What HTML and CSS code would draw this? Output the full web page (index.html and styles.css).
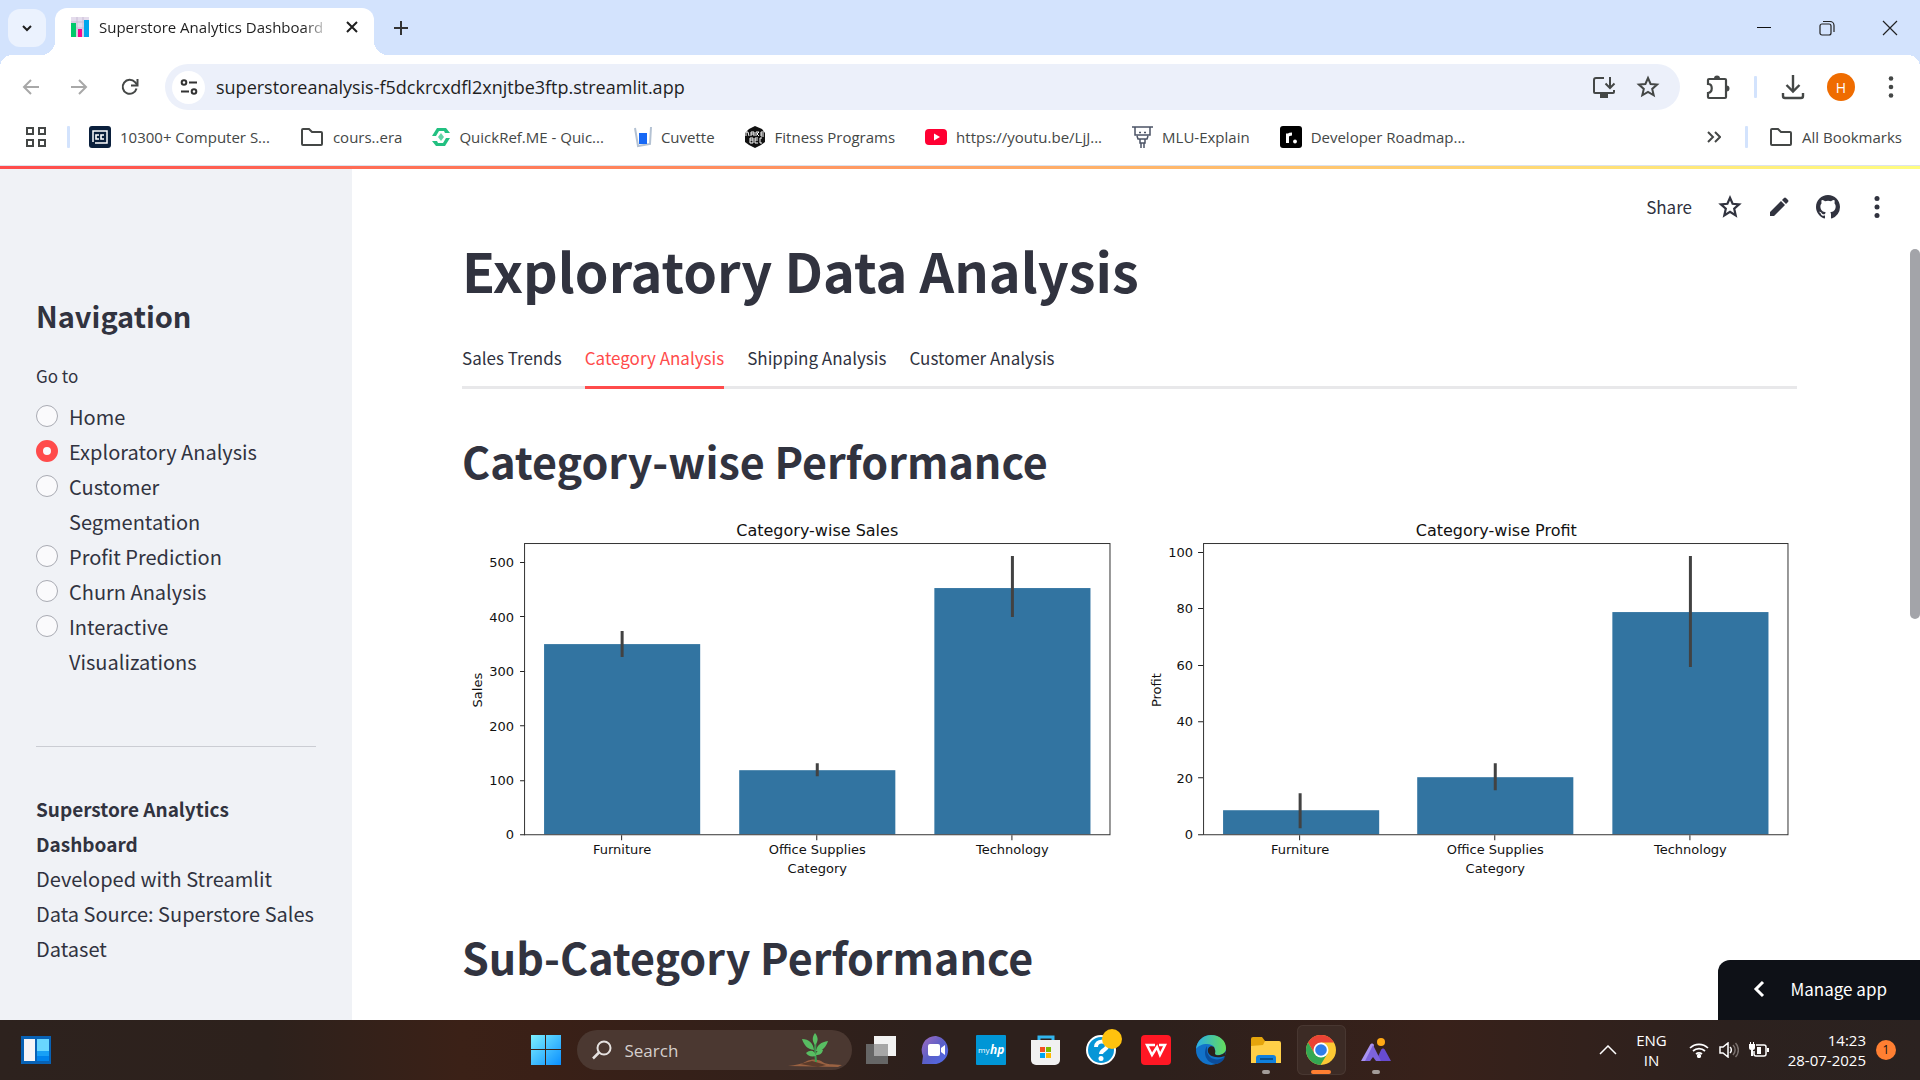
FILE: index.html
```html
<!DOCTYPE html>
<html lang="en">
<head>
<meta charset="utf-8">
<title>Superstore Analytics Dashboard</title>
<link rel="stylesheet" href="styles.css">
</head>
<body>
<div class="tabstrip">
  <button class="tab-search" aria-label="Search tabs"><svg width="12" height="12" viewBox="0 0 12 12"><path d="M2 4l4 4 4-4" fill="none" stroke="#1f1f1f" stroke-width="2"/></svg></button>
  <div class="browser-tab">
    <svg width="20" height="20" viewBox="0 0 20 20"><path fill="#e4dcec" d="M1 0h18v20H1z"/><path stroke="#c9bcd6" d="M1 5h18M7 0v20M13 0v20M1 11h18"/><path fill="#00c96b" d="M1 6h5v14H1z"/><path fill="#f70a8d" d="M8 12h4v8H8z"/><path fill="#00a6ed" d="M14 3h5v17h-5z"/></svg>
    <span class="tab-title">Superstore Analytics Dashboard</span>
    <button class="bare" aria-label="Close tab"><svg width="14" height="14" viewBox="0 0 14 14"><path d="M2 2l10 10M12 2L2 12" stroke="#1f1f1f" stroke-width="2"/></svg></button>
  </div>
  <button class="bare new-tab" aria-label="New tab"><svg width="16" height="16" viewBox="0 0 16 16"><path d="M8 1v14M1 8h14" stroke="#333" stroke-width="2"/></svg></button>
  <div class="window-controls">
    <button class="bare" aria-label="Minimize"><svg width="16" height="16" viewBox="0 0 16 16"><path d="M1 7.500h14" stroke="#111"/></svg></button>
    <button class="bare" aria-label="Restore"><svg width="16" height="16" viewBox="0 0 16 16" fill="none" stroke="#222" stroke-width="1.200"><rect x="1" y="4" width="11" height="11" rx="2"/><path d="M4 1.500h7a4 4 0 0 1 4 4V12"/></svg></button>
    <button class="bare" aria-label="Close"><svg width="16" height="16" viewBox="0 0 16 16"><path d="M1 1l14 14M15 1L1 15" stroke="#222" stroke-width="1.200"/></svg></button>
  </div>
</div>

<div class="toolbar">
  <button class="bare nav-btn" aria-label="Back"><svg width="18" height="18" viewBox="0 0 18 18" fill="none" stroke="#a8a8a8" stroke-width="2"><path d="M17 9H2M9 2L2 9l7 7"/></svg></button>
  <button class="bare nav-btn" aria-label="Forward"><svg width="18" height="18" viewBox="0 0 18 18" fill="none" stroke="#a8a8a8" stroke-width="2"><path d="M1 9h15M9 2l7 7-7 7"/></svg></button>
  <button class="bare nav-btn reload" aria-label="Reload"><svg width="18" height="18" viewBox="0 0 18 18" fill="none" stroke="#444746" stroke-width="2"><path d="M15.500 10.500A7 7 0 1 1 14 4.200L16 6.500"/><path d="M16.500 1v6.500H10"/></svg></button>
  <div class="omnibox">
    <button class="site-info" aria-label="Site information"><svg width="18" height="18" viewBox="0 0 18 18" fill="none" stroke="#333" stroke-width="2"><circle cx="4" cy="4.500" r="2.300"/><path d="M9 4.500h8M1 13.500h8"/><circle cx="14" cy="13.500" r="2.300"/></svg></button>
    <input class="url" type="text" aria-label="Address" value="superstoreanalysis-f5dckrcxdfl2xnjtbe3ftp.streamlit.app">
    <button class="bare" aria-label="Install app"><svg width="24" height="24" viewBox="0 0 24 24" fill="none" stroke="#444746" stroke-width="2"><path d="M12 3H4a2 2 0 0 0-2 2v12a1 1 0 0 0 1 1h18a1 1 0 0 0 1-1v-2"/><path d="M18 2v10M13.500 8.500L18 13l4.500-4.500"/><path fill="#444746" d="M9 19h6v3H9z"/></svg></button>
    <button class="bare" aria-label="Bookmark this tab"><svg width="24" height="24" viewBox="0 0 24 24" fill="none" stroke="#444746" stroke-width="2"><path d="M12 3l2.600 6 6.500.600-4.900 4.300 1.500 6.400-5.700-3.400-5.700 3.400 1.500-6.400-4.900-4.300 6.500-.600z"/></svg></button>
  </div>
  <button class="bare ext" aria-label="Extensions"><svg width="24" height="26" viewBox="0 0 24 26"><path d="M3 5h16a1 1 0 0 1 1 1v17a1 1 0 0 1-1 1H3a1 1 0 0 1-1-1v-4c5-1 5-9 0-9V6a1 1 0 0 1 1-1z" fill="none" stroke="#444746" stroke-width="2.200"/><path fill="#444746" d="M8 4.500a3 3 0 0 1 6 0zM20.500 11.500a3 3 0 0 1 0 6z"/></svg></button>
  <span class="divider"></span>
  <button class="bare download" aria-label="Downloads"><svg width="24" height="26" viewBox="0 0 24 26" fill="none" stroke="#444746" stroke-width="2.400"><path d="M12 1v16M5.500 11l6.500 6.500 6.500-6.500M2 19v3a2 2 0 0 0 2 2h16a2 2 0 0 0 2-2v-3"/></svg></button>
  <button class="avatar" aria-label="Profile">H</button>
  <button class="bare" aria-label="Menu"><svg width="6" height="24" viewBox="0 0 6 24" fill="#444746"><circle cx="3" cy="3.500" r="2.300"/><circle cx="3" cy="12" r="2.300"/><circle cx="3" cy="20.500" r="2.300"/></svg></button>
</div>

<nav class="bookmarks" aria-label="Bookmarks">
  <button class="bare apps" aria-label="Apps"><svg width="20" height="20" viewBox="0 0 20 20" fill="none" stroke="#444746" stroke-width="2"><path d="M1 1h6v6H1zM13 1h6v6h-6zM1 13h6v6H1zM13 13h6v6h-6z"/></svg></button>
  <span class="divider"></span>
  <a href="#"><svg width="22" height="22" viewBox="0 0 22 22"><rect width="22" height="22" rx="3" fill="#0a1f3c"/><path d="M4 16V5h14v12H6" fill="none" stroke="#fff" stroke-width="1.500"/><path d="M10 9H7v4h3M15 9h-3v4h3" fill="none" stroke="#fff" stroke-width="1.600"/></svg>10300+ Computer S...</a>
  <a href="#"><svg width="24" height="20" viewBox="0 0 24 20" fill="none" stroke="#444746" stroke-width="2"><path d="M3 2h6l3 3h9a1 1 0 0 1 1 1v11a1 1 0 0 1-1 1H3a1 1 0 0 1-1-1V3a1 1 0 0 1 1-1z"/></svg>cours..era</a>
  <a href="#"><svg width="18" height="22" viewBox="0 0 18 22" fill="#22c081"><path d="M0 10L5 2h9l4 5h-5l-1-2H7L4 10zM18 12l-5 8H4l-4-5h5l1 2h5l3-5z"/><path d="M9 7l3 4-3 4-3-4z" opacity=".7"/></svg>QuickRef.ME - Quic...</a>
  <a href="#"><svg width="18" height="22" viewBox="0 0 18 22"><path d="M1 2l3 18 12-2 1-17" fill="none" stroke="#b4c2d3" stroke-width="2"/><path fill="#1668f5" d="M5 7h8v11H5z"/></svg>Cuvette</a>
  <a href="#"><svg width="21" height="22" viewBox="0 0 21 22"><path fill="#111" d="M10 0l7 3 3 4v9l-4 3-6 3-6-3-4-3V7l4-4z"/><path d="M1 10V6h2l1 4M6 10V6h3v4M6 8h3M11 10V6h3l-2 2 2 2M19 6h-3v4h3M16 8h3M5 17v-5h3v5H5M5 14h3M13 12h-3v5h3M10 14h3M17 12h-2v5h2" fill="none" stroke="#fff"/></svg>Fitness Programs</a>
  <a href="#"><svg width="22" height="22" viewBox="0 0 22 22"><rect y="3" width="22" height="16" rx="4" fill="#f03"/><path fill="#fff" d="M9 7.500l6 3.500-6 3.500z"/></svg>https://youtu.be/LjJ...</a>
  <a href="#"><svg width="21" height="22" viewBox="0 0 21 22" fill="none" stroke="#4b5365" stroke-width="1.500"><path d="M0 1h21M3 1v8h15V1M5 10l1 3h9l1-3M8 13v4h5v-4M9 17v5M12 17v5M7 6.500h2M12 6.500h2"/></svg>MLU-Explain</a>
  <a href="#"><svg width="22" height="22" viewBox="0 0 22 22"><rect width="22" height="22" rx="3"/><path d="M7.500 17V7.500M7.500 11c0-2.500 2-3 4.500-3" fill="none" stroke="#fff" stroke-width="3"/><circle cx="15" cy="15.500" r="1.900" fill="#fff"/></svg>Developer Roadmap...</a>
  <div class="bookmarks-end">
    <button class="bare" aria-label="More bookmarks"><svg width="14" height="14" viewBox="0 0 14 14" fill="none" stroke="#444746" stroke-width="2"><path d="M1 2l5 5-5 5M8 2l5 5-5 5"/></svg></button>
    <span class="divider"></span>
    <a href="#"><svg width="24" height="20" viewBox="0 0 24 20" fill="none" stroke="#444746" stroke-width="2"><path d="M3 2h6l3 3h9a1 1 0 0 1 1 1v11a1 1 0 0 1-1 1H3a1 1 0 0 1-1-1V3a1 1 0 0 1 1-1z"/></svg>All Bookmarks</a>
  </div>
</nav>

<div class="decoration"></div>
<div class="app">
  <aside class="sidebar">
    <h2>Navigation</h2>
    <fieldset class="radio-group">
      <legend>Go to</legend>
      <label><input type="radio" name="page"><span>Home</span></label>
      <label><input type="radio" name="page" checked><span>Exploratory Analysis</span></label>
      <label><input type="radio" name="page"><span>Customer Segmentation</span></label>
      <label><input type="radio" name="page"><span>Profit Prediction</span></label>
      <label><input type="radio" name="page"><span>Churn Analysis</span></label>
      <label><input type="radio" name="page"><span>Interactive Visualizations</span></label>
    </fieldset>
    <hr>
    <p><strong>Superstore Analytics Dashboard</strong><br>Developed with Streamlit<br>Data Source: Superstore Sales Dataset</p>
  </aside>
  <main class="main">
    <div class="app-toolbar">
      <button class="bare share">Share</button>
      <button class="bare" aria-label="Favorite"><svg width="24" height="24" viewBox="0 0 24 24" fill="none" stroke="#31333f" stroke-width="2.200"><path d="M12 2.800l2.600 6 6.500.600-4.900 4.300 1.500 6.800-5.700-3.600-5.700 3.600 1.500-6.800-4.900-4.300 6.500-.600z"/></svg></button>
      <button class="bare" aria-label="Edit"><svg width="24" height="24" viewBox="0 0 24 24" fill="#31333f"><path d="M3 21v-4L14 6l4 4L7 21zM15 5l2-2a1.500 1.500 0 0 1 2 0l2 2a1.500 1.500 0 0 1 0 2l-2 2z"/></svg></button>
      <button class="bare" aria-label="View source"><svg width="24" height="24" viewBox="0 0 16 16" fill="#31333f"><path d="M8 0C3.580 0 0 3.580 0 8c0 3.540 2.290 6.530 5.470 7.590.4.070.55-.17.55-.38 0-.19-.01-.82-.01-1.490-2.010.37-2.530-.49-2.690-.94-.09-.23-.48-.94-.82-1.130-.28-.15-.68-.52-.01-.53.63-.01 1.080.58 1.230.82.72 1.210 1.870.87 2.330.66.07-.52.28-.87.51-1.070-1.780-.2-3.640-.89-3.640-3.950 0-.87.31-1.590.82-2.150-.08-.2-.36-1.020.08-2.120 0 0 .67-.21 2.200.82a7.600 7.600 0 0 1 4 0c1.530-1.040 2.200-.82 2.200-.82.44 1.100.16 1.920.08 2.120.51.56.82 1.270.82 2.150 0 3.070-1.870 3.750-3.650 3.950.29.25.54.73.54 1.480 0 1.070-.01 1.930-.01 2.200 0 .21.15.46.55.38A8 8 0 0 0 16 8c0-4.420-3.580-8-8-8z"/></svg></button>
      <button class="bare" aria-label="App menu"><svg width="24" height="24" viewBox="0 0 24 24" fill="#31333f"><circle cx="12" cy="3.500" r="2.500"/><circle cx="12" cy="12" r="2.500"/><circle cx="12" cy="20.500" r="2.500"/></svg></button>
    </div>
    <div class="content">
      <h1>Exploratory Data Analysis</h1>
      <div class="tabs" role="tablist">
        <button role="tab">Sales Trends</button>
        <button role="tab" class="active" aria-selected="true">Category Analysis</button>
        <button role="tab">Shipping Analysis</button>
        <button role="tab">Customer Analysis</button>
      </div>
      <h2>Category-wise Performance</h2>
      <div class="charts">
        <svg class="chart" viewBox="0 0 656 384" role="img" aria-label="Category-wise Sales">
          <g class="bars"><rect x="82" y="134" width="156" height="190"/><rect x="277" y="260" width="156" height="64"/><rect x="472" y="78" width="156" height="246"/></g>
          <path class="error" d="M160 121v26M355 253v13M550 46v61"/>
          <path class="ticks" d="M58 52.500h5M58 106.500h5M58 161.500h5M58 215.500h5M58 270.500h5M58 324.500h5M159.500 325v5M354.500 325v5M549.500 325v5"/>
          <rect class="frame" x="62.500" y="33.500" width="585" height="291"/>
          <text class="title" x="355" y="26">Category-wise Sales</text>
          <g class="ylabels"><text x="52" y="57">500</text><text x="52" y="112">400</text><text x="52" y="166">300</text><text x="52" y="221">200</text><text x="52" y="275">100</text><text x="52" y="329">0</text></g>
          <g class="xlabels"><text x="160" y="344">Furniture</text><text x="355" y="344">Office Supplies</text><text x="550" y="344">Technology</text><text x="355" y="363">Category</text><text transform="rotate(-90 20 180)" x="20" y="180">Sales</text></g>
        </svg>
        <svg class="chart" viewBox="0 0 656 384" role="img" aria-label="Category-wise Profit">
          <g class="bars"><rect x="82" y="300" width="156" height="24"/><rect x="276" y="267" width="156" height="57"/><rect x="471" y="102" width="156" height="222"/></g>
          <path class="error" d="M159 283v35M354 253v27M549 46v111"/>
          <path class="ticks" d="M57 42.500h5M57 98.500h5M57 155.500h5M57 211.500h5M57 267.500h5M57 324.500h5M158.500 325v5M353.500 325v5M548.500 325v5"/>
          <rect class="frame" x="62.500" y="33.500" width="584" height="291"/>
          <text class="title" x="355" y="26">Category-wise Profit</text>
          <g class="ylabels"><text x="52" y="47">100</text><text x="52" y="103">80</text><text x="52" y="160">60</text><text x="52" y="216">40</text><text x="52" y="273">20</text><text x="52" y="329">0</text></g>
          <g class="xlabels"><text x="159" y="344">Furniture</text><text x="354" y="344">Office Supplies</text><text x="549" y="344">Technology</text><text x="354" y="363">Category</text><text transform="rotate(-90 20 180)" x="20" y="180">Profit</text></g>
        </svg>
      </div>
      <h2>Sub-Category Performance</h2>
    </div>
    <div class="scroll-thumb"></div>
    <button class="manage"><svg width="12" height="18" viewBox="0 0 12 18"><path d="M10 2L3 9l7 7" fill="none" stroke="#fff" stroke-width="3"/></svg>Manage app</button>
  </main>
</div>

<footer class="taskbar">
  <div class="task-left"><button class="bare" aria-label="Widgets"><svg width="30" height="28" viewBox="0 0 30 28"><path fill="#0862b5" d="M0 0h30v28H0z"/><path fill="#f5f5f7" d="M3 3h11v22H3z"/><path fill="#69d7ff" d="M16 3h12v12H16z"/><path fill="#18a0f5" d="M16 15h12v5H16z"/><path fill="#0083ec" d="M16 20h12v5H16z"/></svg></button></div>
  <div class="task-center">
    <button class="bare task" aria-label="Start"><svg width="30" height="30" viewBox="0 0 30 30"><defs><linearGradient id="win" x2="1" y2="1"><stop stop-color="#7df0ff"/><stop offset="1" stop-color="#0a8fff"/></linearGradient></defs><path fill="url(#win)" d="M0 0h14v14H0zM15 0h15v14H15zM0 15h14v15H0zM15 15h15v15H15z"/></svg></button>
    <label class="search">
      <svg width="20" height="20" viewBox="0 0 20 20" fill="none" stroke="#e6e2e0" stroke-width="2"><circle cx="12" cy="8" r="6.500"/><path stroke-width="2.500" d="M7 12.500L1 18.500"/></svg>
      <input type="text" placeholder="Search" aria-label="Search">
      <svg width="54" height="34" viewBox="0 0 54 34"><path fill="#9a6242" d="M0 33c8-1 14-2 19-5 5-2 9-2 14 0 5 4 11 3 21 4l-4 2z"/><path fill="#5b3b2b" d="M12 31l12-3 14 4-8 2z"/><path d="M28 29C27 20 27 12 28 6" stroke="#3b9b4e" stroke-width="2" fill="none"/><path fill="#58bd62" d="M27 0c4 5 3 9 0 12-3-4-3-8 0-12zM14 6c7 0 11 4 12 11-7-1-10-5-12-11zM40 8c-7 1-11 4-12 10 7 0 10-4 12-10zM18 20c5-4 9-2 10 3-5 1-8 0-10-3zM35 17c-4-1-7 1-7 5 4 0 6-1 7-5z"/></svg>
    </label>
    <button class="bare task" aria-label="Task view"><svg width="30" height="28" viewBox="0 0 30 28"><path fill="#f2f2f2" d="M8 0h22v20H8z"/><path fill="#666" d="M0 8h22v20H0z"/><path fill="#a6a6a6" d="M8 8h14v12H8z"/></svg></button>
    <button class="bare task" aria-label="Chat"><svg width="30" height="28" viewBox="0 0 30 28"><defs><linearGradient id="chat" x2="1" y2="1"><stop stop-color="#a46bc0"/><stop offset=".5" stop-color="#5b5fc7"/><stop offset="1" stop-color="#4f6bed"/></linearGradient></defs><path fill="url(#chat)" d="M15 0a14 14 0 1 1-4 28H1l1-8A14 14 0 0 1 15 0z"/><rect x="7" y="8" width="12" height="12" rx="2" fill="#fff"/><path fill="#fff" d="M20 12l4-3v10l-4-3z"/></svg></button>
    <button class="bare task" aria-label="myHP"><svg width="30" height="30" viewBox="0 0 30 30"><rect width="30" height="30" rx="1" fill="#0096d6"/><text class="logo-my" x="2" y="18">my</text><text class="logo-hp" x="14" y="19">hp</text></svg></button>
    <button class="bare task" aria-label="Store"><svg width="30" height="30" viewBox="0 0 30 30"><path d="M8 7V2h14v5" fill="none" stroke="#31b5ee" stroke-width="3"/><path fill="#f1f1f1" d="M0 5h29v20a5 5 0 0 1-5 5H5a5 5 0 0 1-5-5z"/><path fill="#f25022" d="M9 12h5v5H9z"/><path fill="#7fba00" d="M15 12h5v5h-5z"/><path fill="#00a4ef" d="M9 18h5v5H9z"/><path fill="#ffb900" d="M15 18h5v5h-5z"/></svg></button>
    <button class="bare task help" aria-label="Help"><svg width="36" height="36" viewBox="0 0 36 36"><circle cx="15" cy="21" r="14" fill="#0796d7" stroke="#fff" stroke-width="2"/><path d="M10 18c0-7 11-7 11-1 0 4-6 4-6 8" fill="none" stroke="#fff" stroke-width="4"/><circle cx="15" cy="29.500" r="2.500" fill="#fff"/><circle cx="26" cy="10" r="10" fill="#ffc20e"/></svg></button>
    <button class="bare task" aria-label="WPS Office"><svg width="30" height="30" viewBox="0 0 30 30"><rect width="30" height="30" rx="4" fill="#ff1724"/><path d="M14 10H6l5 10 5-8 3 8 5-10h-6" fill="none" stroke="#fff" stroke-width="2.500"/></svg></button>
    <button class="bare task" aria-label="Edge"><svg width="30" height="30" viewBox="0 0 30 30"><defs><linearGradient id="edge"><stop stop-color="#2aaee8"/><stop offset="1" stop-color="#65dd5a"/></linearGradient></defs><circle cx="15" cy="15" r="15" fill="#1272c9"/><path fill="url(#edge)" d="M0 14C1 5 8 0 15 0c9 0 15 6 15 13 0 5-4 7-8 7-3 0-4-1-3-3 1-4-2-8-8-8C6 9 2 11 0 14z"/><path fill="#0b4d9c" d="M11 11c-5 8 0 18 10 18 4-1 7-4 8-7-8 5-17 2-18-6z"/><path fill="#2b201c" d="M18 12c-4-2-7 1-6 5 1 4 8 7 17 4l1-5c-3 4-7 5-10 4-2-1 0-3-1-5z"/></svg></button>
    <button class="bare task running" aria-label="File Explorer"><svg width="30" height="28" viewBox="0 0 30 28"><path fill="#e5a50c" d="M0 3a2 2 0 0 1 2-2h9l3 4v5H0z"/><path fill="#ffcf48" d="M0 10l12-1 2-4h14a2 2 0 0 1 2 2v20H0z"/><path fill="#1080dd" d="M5 27v-5a3 3 0 0 1 3-3h14a3 3 0 0 1 3 3v5z"/><path stroke="#075290" stroke-width="2" d="M9 23h13"/></svg></button>
    <button class="bare task current" aria-label="Chrome"><svg width="30" height="30" viewBox="0 0 30 30"><circle cx="15" cy="15" r="15" fill="#fcc934"/><path fill="#ea4335" d="M2 7.500A15 15 0 0 1 28 7.500H15L8.500 18.500z"/><path fill="#34a853" d="M2 7.500A15 15 0 0 0 14.500 30l7-11.500h-13z"/><circle cx="15" cy="15" r="7.500" fill="#fff"/><circle cx="15" cy="15" r="5.800" fill="#2f7de9"/></svg></button>
    <button class="bare task running" aria-label="App"><svg width="30" height="24" viewBox="0 0 30 24"><circle cx="20" cy="4" r="4" fill="#ffa915"/><path fill="#674bd0" d="M15 23l5-11c1-2 3-2 4 0l6 11z"/><path fill="#a892f0" d="M0 23L9 7c1-2 3-2 4 0l-4 16z"/><path fill="#7d63dc" d="M9 13l3-6 8 16h-5l-3-4-3 4H4z"/></svg></button>
  </div>
  <div class="tray">
    <button class="bare" aria-label="Hidden icons"><svg width="18" height="10" viewBox="0 0 18 10"><path d="M1 9l8-8 8 8" fill="none" stroke="#fff" stroke-width="1.500"/></svg></button>
    <span class="lang">ENG<br>IN</span>
    <span class="status">
      <svg width="20" height="16" viewBox="0 0 20 16" fill="none" stroke="#fff" stroke-width="1.700"><path d="M1 6a13 13 0 0 1 18 0M4 9a9 9 0 0 1 12 0M7 12a5 5 0 0 1 6 0"/><circle cx="10" cy="14" r="1.300" fill="#fff"/></svg>
      <svg width="20" height="16" viewBox="0 0 20 16" fill="none" stroke="#fff" stroke-width="1.500"><path d="M1 5h3l5-4v14l-5-4H1zM11 5a4 4 0 0 1 0 6"/><path stroke="#7a716e" d="M14 3a7 7 0 0 1 0 10M16.500 1a10 10 0 0 1 0 14"/></svg>
      <svg width="20" height="16" viewBox="0 0 20 16"><path d="M7 3h8a2 2 0 0 1 2 2v7a2 2 0 0 1-2 2H7a2 2 0 0 1-2-2V9" fill="none" stroke="#fff" stroke-width="1.500"/><path fill="#fff" d="M8 5h4v7H8zM18 6h2v4h-2zM0 2h1V0h1v2h2V0h1v2h1v4a2 2 0 0 1-2 2v6H2V8a2 2 0 0 1-2-2z"/></svg>
    </span>
    <span class="clock">14:23<br>28-07-2025</span>
    <span class="badge">1</span>
  </div>
</footer>
</body>
</html>
```
FILE: styles.css
```css
* { box-sizing: border-box; }
body {
  margin: 0;
  height: 100vh;
  display: flex;
  flex-direction: column;
  overflow: hidden;
  background: #fff;
  color: #31333f;
  font-family: "Open Sans", sans-serif;
}
svg { display: block; flex: none; }
button, input { font: inherit; color: inherit; }
.bare { border: 0; padding: 0; background: none; display: flex; align-items: center; justify-content: center; }

/* Browser frame */
.tabstrip { flex: none; display: flex; align-items: center; height: 55px; padding-left: 8px; background: #d3e3fd; }
.tab-search { width: 38px; height: 38px; border: 0; border-radius: 12px; padding: 0; background: #ebf2fe; display: flex; align-items: center; justify-content: center; }
.browser-tab { width: 319px; height: 47px; align-self: flex-end; margin-left: 9px; padding: 0 15px 10px; border-radius: 12px 12px 0 0; background: #fff; display: flex; align-items: center; gap: 9px; position: relative; }
.browser-tab::before, .browser-tab::after { content: ""; position: absolute; bottom: 0; width: 14px; height: 14px; }
.browser-tab::before { right: 100%; background: radial-gradient(circle at 0 0, transparent 14px, #fff 14px); }
.browser-tab::after { left: 100%; background: radial-gradient(circle at 100% 0, transparent 14px, #fff 14px); }
.tab-title { width: 231px; overflow: hidden; white-space: nowrap; font-size: 15px; line-height: 24px; color: #1f1f1f; mask-image: linear-gradient(90deg, #000 205px, transparent 231px); }
.browser-tab .bare { margin-left: auto; }
.new-tab { margin-left: 19px; }
.window-controls { margin-left: auto; padding-right: 22px; display: flex; gap: 47px; }

.toolbar { flex: none; display: flex; align-items: center; height: 64px; padding: 0 26px 0 22px; background: #fff; border-radius: 12px 12px 0 0; box-shadow: 0 -12px 0 #d3e3fd; clip-path: inset(0); }
.tabstrip + .toolbar { background: radial-gradient(circle at 12px 12px, #fff 12px, #d3e3fd 12px) 0 0 / 12px 12px no-repeat, radial-gradient(circle at 0 12px, #fff 12px, #d3e3fd 12px) 100% 0 / 12px 12px no-repeat, #fff; border-radius: 0; box-shadow: none; }
.nav-btn { margin-right: 30px; }
.reload { margin: 0 26px 0 3px; }
.omnibox { flex: 1; height: 46px; border-radius: 23px; background: #ecf0fa; display: flex; align-items: center; gap: 20px; padding: 0 20px 0 7px; }
.site-info { width: 33px; height: 33px; border: 0; border-radius: 50%; padding: 0; background: #fff; display: flex; align-items: center; justify-content: center; }
.url { flex: 1; min-width: 0; margin-left: -9px; border: 0; padding: 0; background: none; color: #1f1f1f; font-size: 18px; line-height: 24px; }
.divider { width: 3px; height: 22px; border-radius: 1px; background: #d3e3fd; }
.ext { margin: 0 24px 0 26px; }
.download { margin: 0 22px 0 24px; }
.avatar { width: 28px; height: 28px; margin-right: 33px; border: 0; border-radius: 50%; padding: 0; background: #ef6c00; color: #fff; font-size: 14px; }

.bookmarks { flex: none; display: flex; align-items: center; gap: 30px; height: 47px; padding: 0 18px 10px 26px; font-size: 15px; line-height: 24px; color: #444746; border-bottom: 1px solid #dde3ee; }
.bookmarks a { display: flex; align-items: center; gap: 9px; color: inherit; text-decoration: none; white-space: nowrap; }
.apps { margin-right: -9px; }
.bookmarks .divider { margin-right: -11px; }
.bookmarks-end { margin-left: auto; display: flex; align-items: center; gap: 24px; }
.bookmarks-end .divider { margin-right: -3px; }

/* Streamlit app */
.decoration { flex: none; height: 3px; background: linear-gradient(90deg, #ff4b4b, #fffd80); }
.app { flex: 1; min-height: 0; display: flex; overflow: hidden; font-family: "Noto Sans CJK SC", "Open Sans", sans-serif; }
.sidebar { flex: none; width: 352px; padding: 124px 36px 0; background: #f0f2f6; font-size: 20px; line-height: 35px; }
.sidebar h2 { margin: 0; font-size: 29px; line-height: 44px; }
.radio-group { margin: 0; border: 0; padding: 0; }
.radio-group legend { padding: 25px 0 9px; font-size: 17px; line-height: 28px; }
.radio-group label { display: flex; gap: 11px; }
.radio-group span { max-width: 200px; }
.radio-group input { flex: none; appearance: none; width: 22px; height: 22px; margin: 6px 0 7px; border: 1px solid #a9abb3; border-radius: 50%; background: #fafafc; }
.radio-group input:checked { border: 7px solid #ff4b4b; }
.sidebar hr { margin: 67px 0 44px; border: 0; height: 1px; background: #cbcdd3; }
.sidebar p { margin: 0; }
.sidebar strong { font-size: 19px; }

.main { flex: 1; min-width: 0; position: relative; overflow: hidden; }
.app-toolbar { display: flex; align-items: center; justify-content: flex-end; gap: 25px; height: 68px; padding: 8px 31px 0 0; }
.share { font-size: 17px; line-height: 24px; margin-right: 1px; }
.content { padding: 0 123px 0 110px; }
h1 { margin: 0; font-size: 54px; line-height: 66px; }
.content h2 { margin: 41px 0 20px; font-size: 43px; line-height: 60px; font-weight: 700; }
.content .charts + h2 { margin-top: 32px; }
.tabs { display: flex; gap: 23px; margin-top: 29px; box-shadow: inset 0 -3px 0 #e8e8ea; }
.tabs button { height: 57px; border: 0; border-bottom: 3px solid transparent; padding: 0 0 3px; background: none; font-size: 17px; line-height: 24px; white-space: nowrap; }
.tabs .active { color: #ff4b4b; border-color: #ff4b4b; }
.charts { display: grid; grid-template-columns: 1fr 1fr; gap: 22px; }
.chart { width: 100%; font-family: "DejaVu Sans", sans-serif; font-size: 13px; fill: #111; }
.bars { fill: #3274a1; }
.error { stroke: #424242; stroke-width: 3; }
.ticks { stroke: #222; }
.frame { fill: none; stroke: #333; }
.title { font-size: 16px; text-anchor: middle; }
.ylabels { text-anchor: end; }
.xlabels { text-anchor: middle; }
.scroll-thumb { position: absolute; top: 80px; right: 0; width: 10px; height: 370px; border-radius: 5px; background: #a3a4a9; }
.manage { position: absolute; right: 0; bottom: 0; height: 60px; border: 0; border-radius: 12px 0 0 0; padding: 0 33px 3px 35px; display: flex; align-items: center; gap: 25px; background: #0e1117; color: #fff; font-size: 17px; }

/* Windows taskbar */
.taskbar { flex: none; display: grid; grid-template-columns: 1fr auto 1fr; align-items: center; height: 60px; color: #fff; background: linear-gradient(90deg, #2d221e, #2d211c 14%, #3b2117 24%, #3a2017 28%, #2d201c 48%, #2d201c 60%, #38211a 75%, #2c211e 90%, #2b2220); }
.task-left { padding-left: 21px; }
.task-center { display: flex; align-items: center; padding-left: 14px; }
.task { width: 55px; height: 50px; position: relative; }
.task:first-child { width: 30px; margin-right: 16px; }
.search { width: 275px; height: 40px; margin-right: 2px; border-radius: 20px; padding: 0 10px 0 15px; display: flex; align-items: center; gap: 13px; background: #4b3831; }
.search input { flex: 1; min-width: 0; border: 0; padding: 0; background: none; font-size: 17px; }
.search input::placeholder { color: #d5cfcc; opacity: 1; }
.logo-my { fill: #fff; font: 8px "Open Sans", sans-serif; }
.logo-hp { fill: #fff; font: italic bold 12px "Open Sans", sans-serif; }
.help { padding: 0 0 6px 6px; }
.running::after, .current::after { content: ""; position: absolute; bottom: 1px; width: 8px; height: 4px; border-radius: 2px; background: #a39c99; }
.task.current { width: 49px; margin: 0 3px; border-radius: 6px; background: #3c2b25; box-shadow: inset 0 0 0 1px #483731; }
.current::after { width: 20px; background: #ff7f32; }
.tray { display: flex; align-items: center; justify-content: flex-end; padding-right: 24px; font-size: 15px; line-height: 20px; }
.lang { margin: 0 22px 0 19px; text-align: center; }
.status { display: flex; gap: 10px; margin-right: 19px; }
.clock { text-align: right; }
.badge { width: 20px; height: 20px; margin-left: 10px; border-radius: 50%; background: #ff7f32; color: #111; font-size: 12px; text-align: center; }
```
